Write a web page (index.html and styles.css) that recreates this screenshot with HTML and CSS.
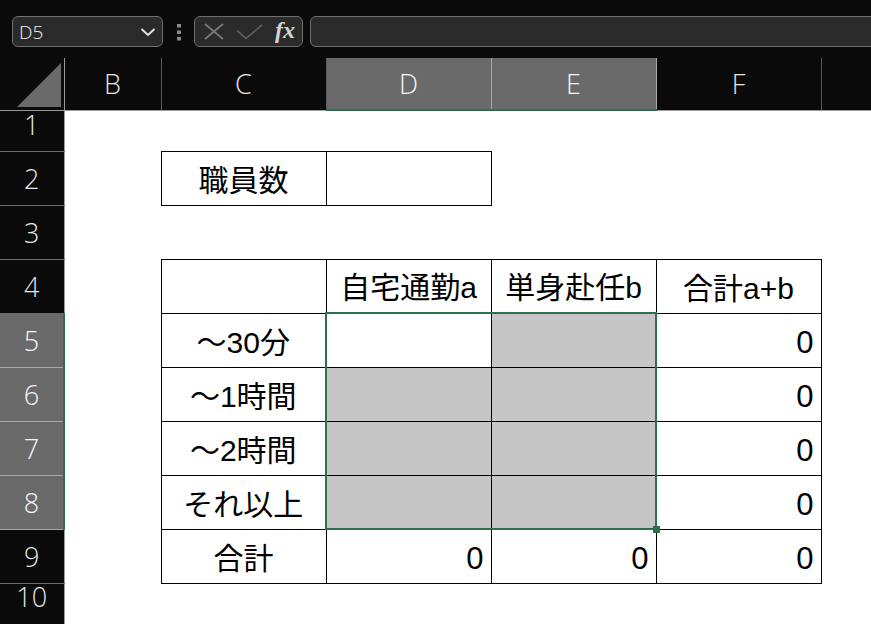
FILE: index.html
```html
<!DOCTYPE html>
<html>
<head>
    <title>通勤時間集計</title>
    <link rel="stylesheet" href="styles.css">
</head>
<body>
    <div class="toolbar">
        <div class="name-box">
            <span>D5</span>
            <svg width="16" height="10" viewBox="0 0 16 10"><polyline points="1.5,2 8,8 14.5,2" fill="none" stroke="#e6e6e6" stroke-width="1.8"/></svg>
        </div>
        <svg class="grip" width="4" height="17" viewBox="0 0 4 17">
            <rect x="0" y="0" width="4" height="3.5" fill="#8a8a8a"/>
            <rect x="0" y="6.5" width="4" height="3.5" fill="#8a8a8a"/>
            <rect x="0" y="13" width="4" height="3.5" fill="#8a8a8a"/>
        </svg>
        <div class="fx-box">
            <svg width="20" height="17" viewBox="0 0 20 17"><path d="M1 1 L19 16 M19 1 L1 16" stroke="#7a7a7a" stroke-width="1.7" fill="none"/></svg>
            <svg class="check" width="27" height="16" viewBox="0 0 27 16"><polyline points="1,6.5 10,14.5 26,1" fill="none" stroke="#5c5c5c" stroke-width="1.7"/></svg>
            <span class="fx">fx</span>
        </div>
        <div class="formula"></div>
    </div>

    <table class="sheet">
        <colgroup>
            <col class="c-hdr"><col class="c-b"><col class="c-wide"><col class="c-wide"><col class="c-wide"><col class="c-wide"><col class="c-wide">
        </colgroup>
        <tr class="r-head">
            <th class="corner"><svg width="64" height="51" viewBox="0 0 64 51"><polygon points="17,49 61,49 61,5" fill="#6a6a6a"/></svg></th>
            <th class="col">B</th>
            <th class="col">C</th>
            <th class="col sel">D</th>
            <th class="col sel">E</th>
            <th class="col">F</th>
            <th class="col"></th>
        </tr>
        <tr class="r-short">
            <th class="row top">1</th>
            <td></td><td></td><td></td><td></td><td></td><td></td>
        </tr>
        <tr>
            <th class="row">2</th>
            <td></td><td class="b center">職員数</td><td class="b"></td><td></td><td></td><td></td>
        </tr>
        <tr>
            <th class="row">3</th>
            <td></td><td></td><td></td><td></td><td></td><td></td>
        </tr>
        <tr>
            <th class="row">4</th>
            <td></td><td class="b"></td><td class="b center">自宅通勤a</td><td class="b center">単身赴任b</td><td class="b center">合計a+b</td><td></td>
        </tr>
        <tr>
            <th class="row sel">5</th>
            <td></td><td class="b center">～30分</td>
            <td class="b s-top s-left"></td>
            <td class="b shade s-top s-right"></td>
            <td class="b num">0</td><td></td>
        </tr>
        <tr>
            <th class="row sel">6</th>
            <td></td><td class="b center">～1時間</td>
            <td class="b shade s-left"></td>
            <td class="b shade s-right"></td>
            <td class="b num">0</td><td></td>
        </tr>
        <tr>
            <th class="row sel">7</th>
            <td></td><td class="b center">～2時間</td>
            <td class="b shade s-left"></td>
            <td class="b shade s-right"></td>
            <td class="b num">0</td><td></td>
        </tr>
        <tr>
            <th class="row sel">8</th>
            <td></td><td class="b center">それ以上</td>
            <td class="b shade s-left s-bottom"></td>
            <td class="b shade s-right s-bottom"><span class="handle"></span></td>
            <td class="b num">0</td><td></td>
        </tr>
        <tr>
            <th class="row">9</th>
            <td></td><td class="b center">合計</td>
            <td class="b num">0</td>
            <td class="b num">0</td>
            <td class="b num">0</td><td></td>
        </tr>
        <tr>
            <th class="row last">10</th>
            <td></td><td></td><td></td><td></td><td></td><td></td>
        </tr>
    </table>
</body>
</html>
```

FILE: styles.css
```css
body {
    margin: 0;
    background: #0a0a0a;
    overflow: hidden;
    font-family: "Liberation Sans", "Noto Sans CJK JP", sans-serif;
}

/* name box + formula bar */
.toolbar {
    height: 58px;
    box-sizing: border-box;
    padding: 16px 0 0 12px;
    display: flex;
    align-items: flex-start;
    width: 1100px;
}

.name-box,
.fx-box,
.formula {
    height: 31px;
    box-sizing: border-box;
    border: 1px solid #6f6f6f;
    border-radius: 6px;
    background: #2a2a2a;
}

.name-box {
    width: 151px;
    display: flex;
    align-items: center;
    justify-content: space-between;
    padding: 0 6px 0 6px;
    color: #f2f2f2;
    font: 300 19px "Open Sans", sans-serif;
}

.grip {
    margin: 8px 13px 0 14px;
}

.fx-box {
    width: 109px;
    display: flex;
    align-items: center;
    padding: 0 0 0 9px;
}

.check {
    margin-left: 12px;
}

.fx {
    margin-left: 12px;
    color: #d2d2d2;
    font: italic bold 24px "Liberation Serif", serif;
    margin-top: -3px;
}

.formula {
    flex: 0 0 700px;
    margin-left: 7px;
}

/* grid */
.sheet {
    table-layout: fixed;
    width: 986px;
    border-collapse: collapse;
    background: #fff;
}

.c-hdr { width: 64px; }
.c-b { width: 97px; }
.c-wide { width: 165px; }

.sheet tr { height: 54px; }
.sheet tr.r-head { height: 52px; }
.sheet tr.r-short { height: 41px; }

.sheet th {
    padding: 0;
    background: #0a0a0a;
    color: #e4e4e4;
    font: 300 27px "Open Sans", sans-serif;
}

.sheet th.corner {
    border-right: 1px solid #9a9a9a;
    border-bottom: 1px solid #9a9a9a;
    line-height: 0;
}

.corner svg {
    display: block;
}

th.col {
    border-right: 1px solid #5a5a5a;
    border-bottom: 1px solid #9a9a9a;
}

th.row {
    border-bottom: 1px solid #6a6a6a;
    border-right: 1px solid #9a9a9a;
}

th.row.top {
    vertical-align: top;
    padding-top: 0;
    line-height: 28px;
}

th.row.last {
    vertical-align: top;
    line-height: 26px;
    padding-top: 0;
}

th.sel {
    background: #6a6a6a;
    color: #f6f6f6;
}

th.col.sel {
    border-right-color: #a8a8a8;
    border-bottom: 2px solid #2e6f4e;
}

th.row.sel {
    border-bottom-color: #a8a8a8;
    border-right: 2px solid #2e6f4e;
}

/* cells */
.sheet td {
    padding: 0 7px 6px;
    vertical-align: bottom;
    font-size: 30px;
    line-height: 36px;
    color: #000;
    white-space: nowrap;
}

td.b { border: 1px solid #000; }
td.center { text-align: center; }

td.num {
    text-align: right;
    font-size: 31px;
    padding-bottom: 6px;
}

td.shade { background: #c6c6c6; }

td.s-top { border-top: 2px solid #2e6f4e; }
td.s-left { border-left: 2px solid #2e6f4e; }
td.s-right { border-right: 2px solid #2e6f4e; }
td.s-bottom { border-bottom: 2px solid #2e6f4e; position: relative; }

.handle {
    position: absolute;
    right: -5px;
    bottom: -5px;
    width: 7px;
    height: 7px;
    background: #2e6f4e;
}
```
